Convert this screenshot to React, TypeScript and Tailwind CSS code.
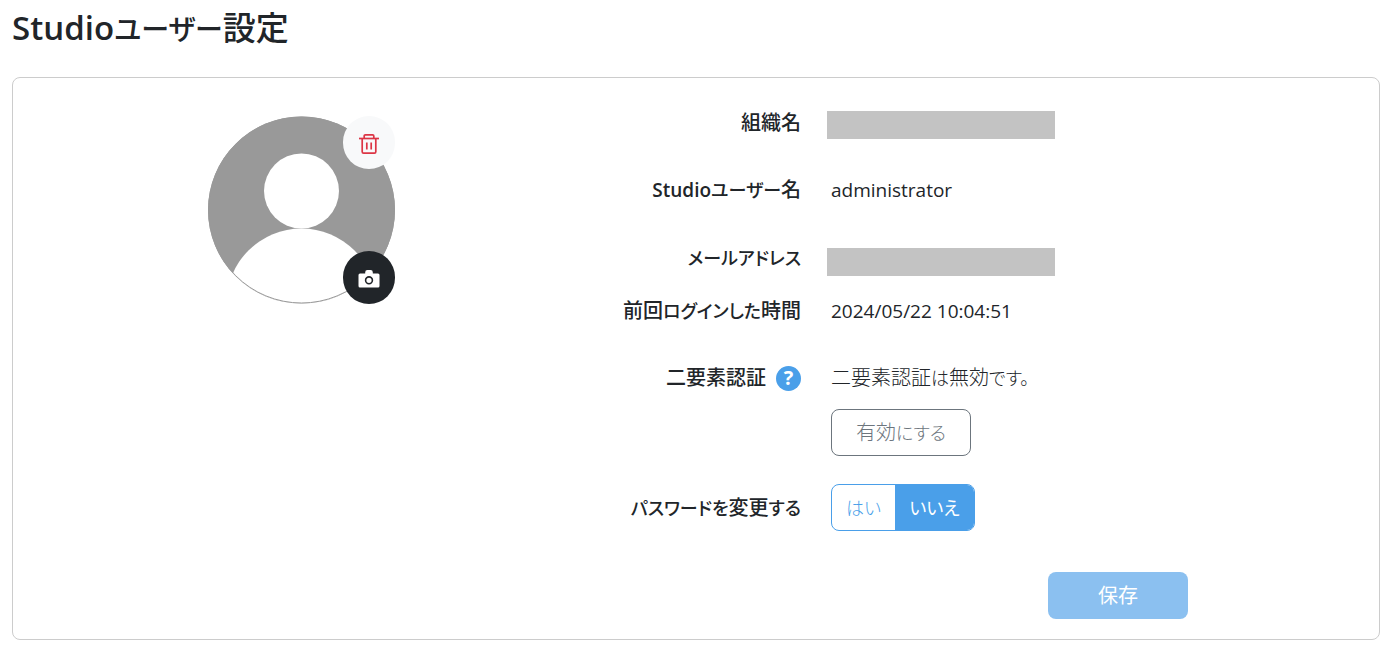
import type { ReactNode } from 'react';

function Avatar() {
  return (
    <svg viewBox="0 0 187 188" className="block h-[188px] w-[187px]" role="img" aria-label="プロフィール画像">
      <defs>
        <clipPath id="avatar-clip">
          <circle cx="93.5" cy="94" r="93.5" />
        </clipPath>
      </defs>
      <g clipPath="url(#avatar-clip)">
        <rect width="187" height="188" fill="#999999" />
        <circle cx="93.5" cy="75" r="37.5" fill="#fff" />
        <circle cx="93.5" cy="187.5" r="75" fill="#fff" />
      </g>
      <circle cx="93.5" cy="94" r="93" fill="none" stroke="#999999" strokeWidth="1" />
    </svg>
  );
}

function TrashIcon() {
  return (
    <svg viewBox="0 0 22 22" className="h-[22px] w-[22px]" fill="none" stroke="#dc3545" strokeWidth="1.7" strokeLinejoin="round" aria-hidden="true">
      <path d="M1 5.500H21" />
      <path d="M6.200 5.500V3q0-1.200 1.200-1.200h7.200q1.200 0 1.200 1.200v2.500" />
      <path d="M4.200 5.500v13.300q0 1.400 1.400 1.400h10.800q1.400 0 1.400-1.400V5.500" />
      <path d="M8.800 9.500v7M13.200 9.500v7" />
    </svg>
  );
}

function CameraIcon() {
  return (
    <svg viewBox="0 0 22 20" className="h-5 w-[22px]" aria-hidden="true">
      <path
        d="M2 4.500h5.200V3.200Q7.200 1 9.400 1h3.200q2.200 0 2.200 2.200v1.300H20q1.500 0 1.500 1.500v11q0 1.500-1.500 1.500H2Q.5 18.500 .5 17V6Q.5 4.500 2 4.500z"
        fill="#fff"
      />
      <circle cx="11" cy="11.300" r="3.400" fill="none" stroke="#212529" strokeWidth="1.600" />
    </svg>
  );
}

function Kana({ children }: { children: ReactNode }) {
  return <span className="text-lg leading-none">{children}</span>;
}

type RowProps = { label: ReactNode; children: ReactNode; className?: string };

function Row({ label, children, className = '' }: RowProps) {
  return (
    <div className={`grid grid-cols-[211fr_552fr] gap-x-[26px] ${className}`}>
      <div className="text-right font-medium whitespace-nowrap">{label}</div>
      <div className="px-1 font-light">{children}</div>
    </div>
  );
}

export default function App() {
  return (
    <main className="pr-1.5 pb-2 pl-3 font-['Open_Sans','Noto_Sans_CJK_JP',sans-serif] text-xl leading-[30px] text-[#212529] [font-feature-settings:'palt']">
      <h1 className="pt-2 text-[33px] leading-10 font-medium">
        <span className="font-semibold">Studio</span>
        <span className="text-[28px] leading-none">ユーザー</span>設定
      </h1>
      <section className="mt-[29px] grid grid-cols-[577fr_789fr] rounded-lg border border-[#cccccc] pt-[30px] pb-5">
        <div className="flex justify-center pt-2">
          <div className="relative h-[188px] w-[187px]">
            <Avatar />
            <button type="button" aria-label="画像を削除" className="absolute top-0 right-0 flex h-[53px] w-[52px] items-center justify-center rounded-full bg-[#f8f9fa] pt-0.5">
              <TrashIcon />
            </button>
            <button type="button" aria-label="画像を変更" className="absolute right-0 bottom-0 flex h-[53px] w-[52px] items-center justify-center rounded-full bg-[#212529] pt-0.5">
              <CameraIcon />
            </button>
          </div>
        </div>

        <form onSubmit={(e) => e.preventDefault()}>
          <Row label="組織名">
            <div className="-mx-1 mt-[3px] h-7 w-[228px] bg-[#c3c3c3]" />
          </Row>
          <Row label={<><span className="text-[19px] leading-none font-semibold">Studio</span><Kana>ユーザー</Kana>名</>} className="mt-9">
            <span className="text-[19px] leading-none font-normal">administrator</span>
          </Row>
          <Row label={<Kana>メールアドレス</Kana>} className="mt-[38px]">
            <div className="-mx-1 mt-[5px] h-7 w-[228px] bg-[#c3c3c3]" />
          </Row>
          <Row label={<>前回<Kana>ログインした</Kana>時間</>} className="mt-5">
            <time dateTime="2024-05-22T10:04:51" className="text-[19px] leading-none font-normal">2024/05/22 10:04:51</time>
          </Row>
          <Row
            className="mt-[37px]"
            label={
              <span className="flex items-center justify-end gap-2.5">
                二要素認証
                <button type="button" aria-label="二要素認証について" className="flex h-[25px] w-[25px] items-center justify-center rounded-full bg-[#4a9fe9] text-xl leading-none font-bold text-white">
                  ?
                </button>
              </span>
            }
          >
            <p>二要素認証<Kana>は</Kana>無効<Kana>です。</Kana></p>
            <button type="button" className="mt-4 block h-[47px] w-[140px] rounded-lg border border-[#6c757d] text-[#6c757d]">
              有効<Kana>にする</Kana>
            </button>
          </Row>
          <Row label={<span id="password-label" className="leading-[47px]"><Kana>パスワードを</Kana>変更<Kana>する</Kana></span>} className="mt-7">
            <div role="group" aria-labelledby="password-label" className="flex h-[47px] w-36 overflow-hidden rounded-lg border border-[#4a9fe9]">
              <button type="button" aria-pressed="false" className="w-[63px] text-[#4a9fe9]"><Kana>はい</Kana></button>
              <button type="button" aria-pressed="true" className="flex-1 bg-[#4a9fe9] font-normal text-white"><Kana>いいえ</Kana></button>
            </div>
          </Row>
          <div className="mt-[41px] flex justify-end pr-[191px]">
            <button type="submit" disabled className="h-[47px] w-[140px] rounded-lg bg-[#8bc0f0] font-normal text-white">保存</button>
          </div>
        </form>
      </section>
    </main>
  );
}
